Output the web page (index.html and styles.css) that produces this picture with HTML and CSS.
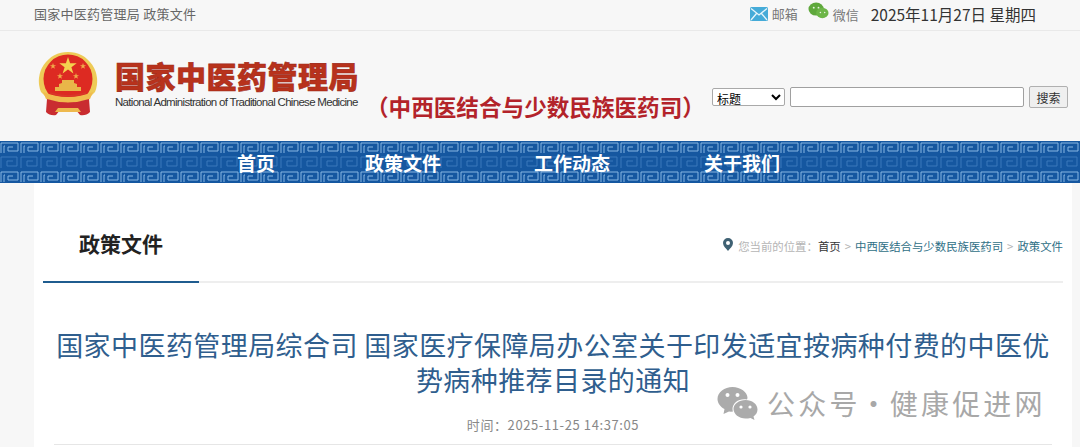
FILE: index.html
```html
<!DOCTYPE html>
<html lang="zh-CN">
<head>
  <meta charset="UTF-8" />
  <title>国家中医药管理局</title>
  <link rel="stylesheet" href="styles.css">
</head>
<body>
  <div class="topbar">
    <div class="crumb-top">国家中医药管理局 政策文件</div>
    <div class="top-right">
      <svg class="icon-mail" viewBox="0 0 18 14"><rect width="18" height="14" rx="1.500" fill="#45abd8"/><path d="M1 1.500 9 8l8-6.500M1 13l5.500-6.500M17 13l-5.500-6.500" fill="none" stroke="#e6f5fb" stroke-width="1.300"/></svg>
      <span class="top-link">邮箱</span>
      <svg class="icon-wx" viewBox="0 0 22 18"><ellipse cx="8.500" cy="7" rx="8" ry="6.800" fill="#5fa83c"/><ellipse cx="15" cy="11" rx="6.500" ry="5.500" fill="#6db648"/><circle cx="6" cy="5.500" r="1" fill="#e8f3e0"/><circle cx="11" cy="5.500" r="1" fill="#e8f3e0"/><circle cx="13" cy="10.500" r=".8" fill="#e8f3e0"/><circle cx="17.500" cy="10.500" r=".8" fill="#e8f3e0"/></svg>
      <span class="top-link wx-link">微信</span>
      <span class="date">2025年11月27日 星期四</span>
    </div>
  </div>

  <div class="header">
    <svg class="emblem" viewBox="0 0 60 64">
      <path d="M30 0a29 29 0 0 1 27 40l-8 8H11l-8-8A29 29 0 0 1 30 0z" fill="#eecb57"/>
      <circle cx="30" cy="27" r="24.500" fill="#dd2a22"/>
      <path d="M30 5l2.100 6.300h6.600l-5.300 3.900 2 6.300-5.400-3.900-5.400 3.900 2-6.300-5.300-3.900h6.600z" fill="#f4d24f"/>
      <path d="M15 11l.8 2.200h2.300l-1.900 1.400.7 2.200-1.900-1.300-1.900 1.300.7-2.200-1.900-1.400h2.300zM45 11l.8 2.200h2.300l-1.900 1.400.7 2.200-1.900-1.300-1.900 1.300.7-2.200-1.900-1.400h2.300zM22 21l.8 2.200h2.300l-1.900 1.400.7 2.200-1.900-1.300-1.900 1.300.7-2.200-1.900-1.400h2.300zM38 21l.8 2.200h2.300l-1.900 1.400.7 2.200-1.900-1.300-1.900 1.300.7-2.200-1.900-1.400h2.300z" fill="#f0a94a"/>
      <path d="M17 39h26v-4h-4v-3l-3-1v-3H24v3l-3 1v3h-4z" fill="#e9b649"/>
      <path d="M5 40q25 10 50 0l-3 7q-22 8-44 0z" fill="#f0bc4e"/>
      <path d="M12 41q18 6 36 0" fill="none" stroke="#d8372a" stroke-width="1.500"/>
      <path d="M9 47q21 7 42 0l1 13q-4 4-10 3l-4-5H22l-4 5q-6 1-10-3z" fill="#c92c30"/>
      <path d="M20 56h20l3 4H17z" fill="#eeb94e"/>
    </svg>
    <div class="logo-text">
      <div class="logo-cn">国家中医药管理局</div>
      <div class="logo-en">National Administration of Traditional Chinese Medicine</div>
    </div>
    <div class="dept">（中西医结合与少数民族医药司）</div>
    <form class="search">
      <select class="search-type"><option>标题</option></select>
      <input class="search-input" type="text">
      <button class="search-btn" type="button">搜索</button>
    </form>
  </div>

  <div class="nav">
    <a class="nav-item nav-home">首页</a>
    <a class="nav-item nav-policy">政策文件</a>
    <a class="nav-item nav-work">工作动态</a>
    <a class="nav-item nav-about">关于我们</a>
  </div>

  <div class="main">
    <div class="section-head">
      <div class="section-title">政策文件</div>
      <div class="location">
        <svg class="icon-pin" viewBox="0 0 10 13"><path fill-rule="evenodd" d="M5 0a5 5 0 0 1 5 5c0 3-3 5.500-5 8-2-2.500-5-5-5-8a5 5 0 0 1 5-5zm0 3a2 2 0 1 0 0 4 2 2 0 0 0 0-4z" fill="#3f6173"/></svg>
        <span class="loc-label">您当前的位置：</span><span class="loc-home">首页</span>
        <span class="loc-sep">&gt;</span><span class="loc-link">中西医结合与少数民族医药司</span>
        <span class="loc-sep">&gt;</span><span class="loc-link">政策文件</span>
      </div>
    </div>
    <h1 class="article-title">国家中医药管理局综合司 国家医疗保障局办公室关于印发适宜按病种付费的中医优势病种推荐目录的通知</h1>
    <div class="article-time">时间：2025-11-25 14:37:05</div>
    <div class="article-rule"></div>
  </div>

  <div class="watermark">
    <svg class="wm-icon" viewBox="0 0 40 33"><path d="M15 0c8 0 15 5 15 11l-.500 1.500C22 11 15 15.500 15 22q0 1.500.500 2.500-2 .300-4 0L6 27l1-5C3 20 0 16 0 12 0 5 7 0 15 0z" fill="#ababab"/><path d="M28 13c6.500 0 12 4 12 9.500 0 3-1.500 5-4 7l1 3.500-4-2q-2.500.500-5 .500c-6.500 0-12-4.500-12-9.500S21.500 13 28 13z" fill="#ababab"/><circle cx="10" cy="8" r="2" fill="#fff"/><circle cx="20" cy="8" r="2" fill="#fff"/><circle cx="23.500" cy="20" r="1.600" fill="#fff"/><circle cx="32.500" cy="20" r="1.600" fill="#fff"/></svg>
    <span class="wm-text">公众号 · 健康促进网</span>
  </div>
</body>
</html>
```

FILE: styles.css
```css
* {
  box-sizing: border-box;
}

html, body {
  height: 447px;
  overflow: hidden;
}

body {
  margin: 0;
  position: relative;
  background: #f7f7f7;
  font-family: "Noto Sans CJK SC", "Liberation Sans", sans-serif;
  color: #333;
}

.topbar {
  height: 31px;
  padding: 0 44px 3px 34px;
  border-bottom: 1px solid #e9e9e9;
  display: flex;
  justify-content: space-between;
  align-items: center;
  font-size: 13px;
  letter-spacing: 0.250px;
  color: #666;
}

.top-right {
  display: flex;
  align-items: center;
  letter-spacing: 0;
}

.icon-mail {
  width: 18px;
  height: 14px;
  margin-right: 4px;
}

.icon-wx {
  width: 21px;
  height: 18px;
  margin: 0 4px 0 10px;
  position: relative;
  top: -3px;
}

.top-link {
  font-size: 13px;
  color: #777;
}

.wx-link {
  position: relative;
  top: 1px;
}

.date {
  margin-left: 12px;
  font-size: 15.500px;
  color: #333;
}

.header {
  height: 110px;
  padding-left: 38px;
  display: flex;
  align-items: flex-start;
}

.emblem {
  width: 60px;
  height: 64px;
  margin-top: 21px;
}

.logo-text {
  margin: 25px 0 0 17px;
  width: 243px;
}

.logo-cn {
  font-size: 30px;
  line-height: 38px;
  font-weight: 900;
  letter-spacing: 0.500px;
  color: #b8321c;
  -webkit-text-stroke: 0.6px #a02a18;
  white-space: nowrap;
}

.logo-en {
  font-family: "Liberation Sans", sans-serif;
  font-size: 11.500px;
  line-height: 16px;
  letter-spacing: -0.700px;
  color: #333;
  white-space: nowrap;
}

.dept {
  margin: 60px 0 0 8px;
  width: 346px;
  font-size: 22.600px;
  line-height: 32px;
  font-weight: 700;
  color: #b3232a;
  white-space: nowrap;
}

.search {
  margin: 55px 0 0 0;
  display: flex;
  align-items: center;
}

.search-type {
  width: 73px;
  height: 18px;
  margin-right: 5px;
  padding: 0;
  font: 12px "Noto Sans CJK SC", sans-serif;
  background: #fff;
  border: 1px solid #a9a9a9;
  border-radius: 2px;
}

.search-input {
  width: 234px;
  height: 20px;
  margin-right: 5px;
  background: #fff;
  border: 1px solid #a0a0a0;
  border-radius: 2px;
}

.search-btn {
  width: 39px;
  height: 22px;
  padding: 0;
  font: 12px "Noto Sans CJK SC", sans-serif;
  color: #333;
  background: #efefef;
  border: 1px solid #b0b0b0;
  border-radius: 2px;
}

.nav {
  height: 42px;
  display: flex;
  align-items: center;
  background-color: #1557a0;
  background-image:
    url("data:image/svg+xml,%3Csvg xmlns='http://www.w3.org/2000/svg' width='20' height='13'%3E%3Cpath d='M1 12V2h17v8H8V6h5M4 12V5h1' fill='none' stroke='%2387b6e2' stroke-width='1'/%3E%3C/svg%3E"),
    url("data:image/svg+xml,%3Csvg xmlns='http://www.w3.org/2000/svg' width='20' height='13'%3E%3Cpath d='M1 12V2h17v8H8V6h5M4 12V5h1' fill='none' stroke='%2387b6e2' stroke-width='1'/%3E%3C/svg%3E"),
    url("data:image/svg+xml,%3Csvg xmlns='http://www.w3.org/2000/svg' width='20' height='14'%3E%3Cpath d='M1 13V2h16v9H7V6h6' fill='none' stroke='%233a78bb' stroke-width='1'/%3E%3C/svg%3E");
  background-repeat: repeat-x;
  background-position: 0 0, 0 100%, 0 14px;
  font-size: 19px;
  font-weight: 700;
  color: #fff;
}

.nav-item {
  white-space: nowrap;
}

.nav-home {
  margin-left: 237px;
}

.nav-policy {
  margin-left: 90px;
}

.nav-work {
  margin-left: 93px;
}

.nav-about {
  margin-left: 94px;
}

.main {
  margin: 0 8px 0 34px;
  height: 264px;
  background: #fff;
}

.section-head {
  margin: 0 9px 0 9px;
  height: 100px;
  padding-top: 42px;
  border-bottom: 2px solid #eee;
  display: flex;
  justify-content: space-between;
  position: relative;
}

.section-head::after {
  content: "";
  position: absolute;
  left: 0;
  bottom: -2px;
  width: 156px;
  height: 2px;
  background: #1f5c8f;
}

.section-title {
  margin-left: 36px;
  font-size: 21px;
  line-height: 36px;
  font-weight: 700;
  color: #222;
}

.location {
  display: flex;
  align-items: center;
  height: 36px;
  margin-top: 3px;
  font-size: 11.400px;
  color: #b5b5b5;
}

.icon-pin {
  width: 10px;
  height: 13px;
  margin: 0 5px 3px 0;
}

.loc-home {
  color: #333;
}

.loc-sep {
  margin: 0 4px;
}

.loc-link {
  color: #2f6f86;
}

.article-title {
  margin: 0;
  padding: 44px 20px 0;
  font-size: 27px;
  line-height: 35px;
  font-weight: 400;
  letter-spacing: 0.420px;
  text-align: center;
  color: #2f5e8e;
}

.article-time {
  margin-top: 19px;
  font-size: 13px;
  line-height: 18px;
  letter-spacing: 0.600px;
  text-align: center;
  color: #888;
}

.article-rule {
  margin: 10px 20px 0;
  border-top: 1px solid #e6e6e6;
}

.watermark {
  position: absolute;
  left: 717px;
  top: 387px;
  display: flex;
  align-items: center;
  height: 33px;
}

.wm-icon {
  width: 41px;
  height: 33px;
  margin-right: 9px;
}

.wm-text {
  font-size: 28px;
  line-height: 33px;
  letter-spacing: 3.200px;
  word-spacing: -10.500px;
  color: #a8a8a8;
  white-space: nowrap;
}
```
